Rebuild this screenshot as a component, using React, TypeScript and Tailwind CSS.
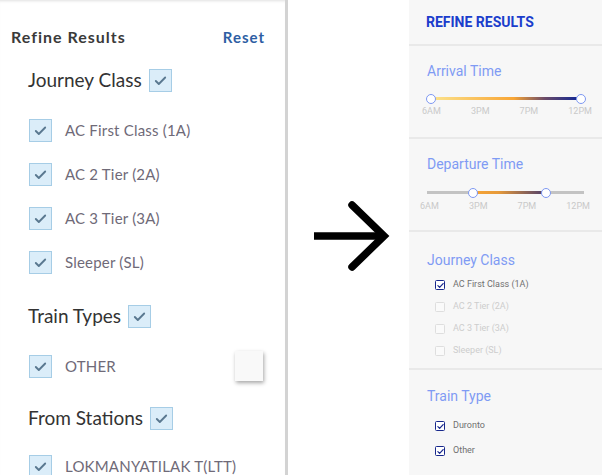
import React from "react";

const BigCheck = () => (
  <span className="flex h-[23px] w-[23px] shrink-0 items-center justify-center border border-[#a6cde6] bg-[#dbedf9]">
    <svg width="15" height="15" viewBox="0 0 16 16" fill="none">
      <path d="M3 8.5l3.2 3.2L13 4.8" stroke="#5a7890" strokeWidth="2" strokeLinecap="round" strokeLinejoin="round" />
    </svg>
  </span>
);

const LeftHeading = ({ label, className }: { label: string; className: string }) => (
  <div className={`flex shrink-0 items-center gap-[7px] pl-[28px] ${className}`}>
    <span className="text-[19px] text-[#333]">{label}</span>
    <BigCheck />
  </div>
);

const LeftItem = ({ label, className = "", children }: { label: string; className?: string; children?: React.ReactNode }) => (
  <div className={`flex h-[44px] shrink-0 items-center pl-[29px] ${className}`}>
    <BigCheck />
    <span className="ml-[13px] text-[15px] tracking-[0.2px] text-[#6f6a78]">{label}</span>
    {children}
  </div>
);

const SmallCheck = ({ checked }: { checked: boolean }) =>
  checked ? (
    <span className="flex h-[10px] w-[10px] items-center justify-center rounded-[1.5px] border-[1.5px] border-[#18288c] bg-white">
      <svg width="7" height="7" viewBox="0 0 8 8" fill="none">
        <path d="M1 4.2l2 2L7 1.8" stroke="#18288c" strokeWidth="1.4" strokeLinecap="round" strokeLinejoin="round" />
      </svg>
    </span>
  ) : (
    <span className="h-[10px] w-[10px] rounded-[1.5px] border border-[#dedede] bg-white/40" />
  );

const SmallItem = ({ label, checked }: { label: string; checked: boolean }) => (
  <div className="flex h-[22px] shrink-0 items-center pl-[8px]">
    <SmallCheck checked={checked} />
    <span className={`ml-[8px] text-[9px] ${checked ? "text-[#707070]" : "text-[#cdcdcd]"}`}>{label}</span>
  </div>
);

const Handle = ({ left }: { left: string }) => (
  <span
    className="absolute top-1/2 h-[10px] w-[10px] -translate-x-1/2 -translate-y-1/2 rounded-full border-[1.5px] border-[#7e98f2] bg-white"
    style={{ left }}
  />
);

const Labels = () => (
  <div className="flex justify-between text-[9px] leading-[13px] text-[#c9c9c9]">
    <span>6AM</span>
    <span>3PM</span>
    <span>7PM</span>
    <span>12PM</span>
  </div>
);

const Divider = () => <div className="h-[2px] shrink-0 bg-[#e9e9e9]" />;

export default function App() {
  return (
    <div className="flex h-[475px] w-[602px] overflow-hidden bg-white">
      {/* before */}
      <div
        className="flex w-[288px] shrink-0 flex-col border-r-[3px] border-[#d3d3d3] pr-[20px] shadow-[inset_0_3px_3px_-2px_rgba(0,0,0,0.12)]"
        style={{ fontFamily: "Lato, 'Noto Sans', sans-serif" }}
      >
        <div className="mt-[17px] flex h-[40px] shrink-0 items-center justify-between pl-[11px]">
          <span className="text-[16px] font-bold tracking-[1px] text-[#3a3a3a]">Refine Results</span>
          <span className="text-[15px] font-bold tracking-[1px] text-[#2d5ea3]">Reset</span>
        </div>
        <LeftHeading label="Journey Class" className="h-[46px]" />
        <LeftItem label="AC First Class (1A)" className="mt-[5px]" />
        <LeftItem label="AC 2 Tier (2A)" />
        <LeftItem label="AC 3 Tier (3A)" />
        <LeftItem label="Sleeper (SL)" />
        <LeftHeading label="Train Types" className="mt-[10px] h-[44px]" />
        <LeftItem label="OTHER" className="mt-[6px]">
          <span className="ml-auto mr-[2px] h-[30px] w-[28px] bg-[#f9f9f9] shadow-[1px_2px_4px_rgba(0,0,0,0.35)]" />
        </LeftItem>
        <LeftHeading label="From Stations" className="mt-[8px] h-[44px]" />
        <LeftItem label="LOKMANYATILAK T(LTT)" className="mt-[4px]" />
      </div>

      {/* arrow */}
      <div className="flex flex-1 items-center justify-center">
        <svg width="76" height="74" viewBox="0 0 76 74" className="ml-[6px]">
          <path d="M0 35h70" stroke="#000" strokeWidth="7.5" fill="none" />
          <path d="M38 4l32 31-32 31" stroke="#000" strokeWidth="7.5" fill="none" strokeLinecap="round" strokeLinejoin="miter" />
        </svg>
      </div>

      {/* after */}
      <div className="flex w-[193px] shrink-0 flex-col bg-[#f7f7f7]" style={{ fontFamily: "Roboto, sans-serif" }}>
        <div className="flex h-[44px] shrink-0 items-center pl-[17px] text-[14px] font-bold text-[#1b3dcc]">REFINE RESULTS</div>
        <Divider />

        <div className="flex h-[91px] shrink-0 flex-col pl-[18px]">
          <span className="mt-[15px] text-[14px] text-[#7f9bf4]">Arrival Time</span>
          <div className="relative mt-[15px] ml-[4px] mr-[21px] h-[3px] bg-[linear-gradient(to_right,#fce48e_0%,#f8a636_55%,#6a4a68_76%,#0b2598_100%)]">
            <Handle left="0%" />
            <Handle left="100%" />
          </div>
          <div className="mt-[5px] ml-[-5px] mr-[10px]">
            <Labels />
          </div>
        </div>
        <Divider />

        <div className="flex h-[91px] shrink-0 flex-col pl-[18px]">
          <span className="mt-[15px] text-[14px] text-[#7f9bf4]">Departure Time</span>
          <div className="relative mt-[16px] mr-[18px] h-[3px] bg-[#c3c3c3]">
            <div className="absolute inset-y-0 left-[46px] w-[73px] bg-[linear-gradient(to_right,#f8a534_0%,#e69a3a_35%,#4a3c6c_100%)]" />
            <Handle left="46px" />
            <Handle left="119px" />
          </div>
          <div className="mt-[6px] ml-[-7px] mr-[12px]">
            <Labels />
          </div>
        </div>
        <Divider />

        <div className="flex h-[136px] shrink-0 flex-col pl-[18px]">
          <span className="mt-[18px] mb-[3px] text-[14px] text-[#7f9bf4]">Journey Class</span>
          <SmallItem label="AC First Class (1A)" checked />
          <SmallItem label="AC 2 Tier (2A)" checked={false} />
          <SmallItem label="AC 3 Tier (3A)" checked={false} />
          <SmallItem label="Sleeper (SL)" checked={false} />
        </div>
        <Divider />

        <div className="flex flex-1 flex-col pl-[18px]">
          <span className="mt-[16px] mb-[8px] text-[14px] text-[#7f9bf4]">Train Type</span>
          <SmallItem label="Duronto" checked />
          <div className="h-[3px]" />
          <SmallItem label="Other" checked />
        </div>
      </div>
    </div>
  );
}
